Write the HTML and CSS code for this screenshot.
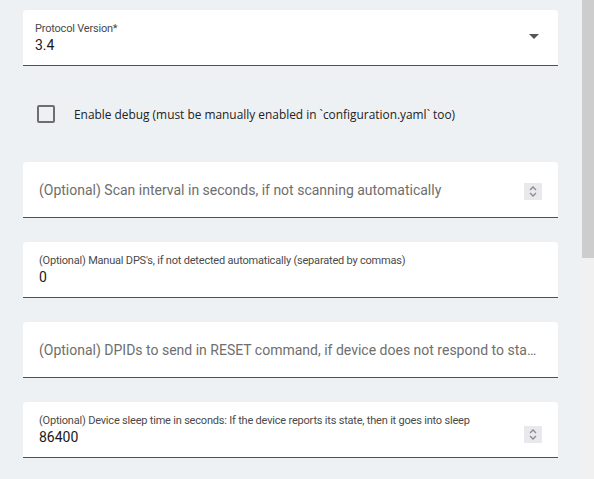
FILE: index.html
```html
<!DOCTYPE html>
<html>
<head>
<meta charset="utf-8">
<link rel="stylesheet" href="styles.css">
</head>
<body>
<div class="page">
  <div class="content">
    <div class="field select">
      <div class="inner">
        <div class="label">Protocol Version*</div>
        <div class="value">3.4</div>
      </div>
      <svg class="arrow" width="10" height="5" viewBox="0 0 10 5"><path d="M0 0 L10 0 L5 5 Z" fill="#555"/></svg>
    </div>

    <div class="check-row">
      <span class="checkbox"></span>
      <span class="check-label">Enable debug (must be manually enabled in `configuration.yaml` too)</span>
    </div>

    <div class="field text">
      <div class="inner">
        <div class="placeholder">(Optional) Scan interval in seconds, if not scanning automatically</div>
      </div>
      <span class="spin"><svg width="10" height="13" viewBox="0 0 10 13"><path d="M2 5 L5 2 L8 5 M2 8 L5 11 L8 8" fill="none" stroke="#8a8a8a" stroke-width="1.3"/></svg></span>
    </div>

    <div class="field text">
      <div class="inner">
        <div class="label">(Optional) Manual DPS's, if not detected automatically (separated by commas)</div>
        <div class="value">0</div>
      </div>
    </div>

    <div class="field text">
      <div class="inner wide">
        <div class="placeholder">(Optional) DPIDs to send in RESET command, if device does not respond to status requests after turning on</div>
      </div>
    </div>

    <div class="field text">
      <div class="inner">
        <div class="label">(Optional) Device sleep time in seconds: If the device reports its state, then it goes into sleep</div>
        <div class="value">86400</div>
      </div>
      <span class="spin low"><svg width="10" height="13" viewBox="0 0 10 13"><path d="M2 5 L5 2 L8 5 M2 8 L5 11 L8 8" fill="none" stroke="#8a8a8a" stroke-width="1.3"/></svg></span>
    </div>
  </div>
  <div class="scrollbar"><div class="thumb"></div></div>
</div>
</body>
</html>
```

FILE: styles.css
```css
html, body {
  margin: 0;
  padding: 0;
  background: #eef1f4;
  font-family: Roboto, "Noto Sans", sans-serif;
  color: #1d1d1d;
}
.page {
  display: flex;
  width: 594px;
  height: 479px;
  overflow: hidden;
}
.content {
  flex: 1;
  padding: 10px 24px 0 23px;
  display: flex;
  flex-direction: column;
}
.field {
  width: 535px;
  height: 55px;
  background: #fff;
  border-radius: 4px 4px 0 0;
  border-bottom: 1px solid #505050;
  display: flex;
  align-items: center;
  box-sizing: content-box;
  flex-shrink: 0;
}
.field + .field { margin-top: 24px; }
.inner {
  flex: 1;
  min-width: 0;
  display: flex;
  flex-direction: column;
  justify-content: center;
}
.select .inner { padding-left: 12px; }
.text .inner { padding-left: 16px; padding-right: 16px; }
.text .inner.wide { padding-right: 18px; }
.label {
  font-size: 11px;
  line-height: 14px;
  color: #4a4a4a;
  white-space: nowrap;
  overflow: hidden;
  letter-spacing: -0.2px;
}
.value {
  font-size: 14px;
  line-height: 18px;
  color: #1a1a1a;
}
.placeholder {
  font-size: 14px;
  color: #6e6e6e;
  white-space: nowrap;
  overflow: hidden;
  text-overflow: ellipsis;
}
.arrow { margin-right: 19px; margin-top: -2px; }
.spin {
  width: 18px;
  height: 17px;
  background: #e9e9ed;
  display: flex;
  align-items: center;
  justify-content: center;
  margin-right: 16px;
  margin-top: 4px;
  flex-shrink: 0;
}
.spin.low { margin-top: 9px; }
.check-row {
  height: 96px;
  display: flex;
  align-items: center;
  padding-left: 14px;
  flex-shrink: 0;
}
.checkbox {
  width: 14px;
  height: 14px;
  border: 2px solid #6e6e6e;
  border-radius: 2px;
  flex-shrink: 0;
}
.check-label {
  margin-left: 19px;
  font-family: "Open Sans", "Noto Sans", sans-serif;
  font-size: 11.9px;
  color: #222;
}
.scrollbar {
  width: 12px;
  background: #f1f1f1;
  flex-shrink: 0;
}
.thumb {
  height: 258px;
  background: #cdcdcd;
}
```
